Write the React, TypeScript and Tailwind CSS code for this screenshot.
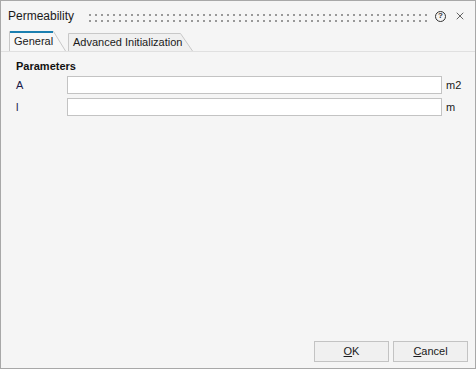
import { X } from 'lucide-react'

function Tab({ label, active, width }: { label: string; active?: boolean; width: number }) {
  const h = active ? 20 : 18
  const slant = 12
  return (
    <div className="relative flex items-center" style={{ width: width + slant, height: h }}>
      <svg className="absolute inset-0" width={width + slant} height={h}>
        <path
          d={`M0.5 ${h} L0.5 0.5 L${width - 0.5} 0.5 L${width + slant - 0.5} ${h}`}
          fill={active ? '#f7f7f7' : '#f0f0f0'}
          stroke="#c8c8c8"
        />
        {active && <rect x="1" y="0" width={width - 2} height="2" fill="#1a7fb0" />}
      </svg>
      <span className="relative pl-[5px] text-[11px] leading-[14px] text-[#1a1a1a]">{label}</span>
    </div>
  )
}

function Row({ label, unit }: { label: string; unit: string }) {
  return (
    <div className="flex items-center h-[18px]">
      <span className="w-[51px] text-[11px] text-[#1a1a4a]">{label}</span>
      <div className="w-[375px] h-[18px] bg-white border border-[#c3c3c3]" />
      <span className="ml-[4px] text-[11px] text-[#1a1a1a]">{unit}</span>
    </div>
  )
}

export default function App() {
  return (
    <div
      className="w-[476px] h-[369px] bg-[#f5f5f5] border border-[#a8a8a8] flex flex-col"
      style={{ fontFamily: '"Liberation Sans", Arial, sans-serif' }}
    >
      <div className="flex items-center h-[30px] pl-[7px] pr-[9px]">
        <span className="text-[12px] text-[#1a1a1a]">Permeability</span>
        <svg className="ml-[15px] flex-1 h-[14px]" height="14">
          <defs>
            <pattern id="grip" x="0" y="5" width="6" height="6" patternUnits="userSpaceOnUse">
              <rect x="0" y="0" width="2" height="2" fill="#999999" />
            </pattern>
          </defs>
          <rect x="0" y="5" width="100%" height="9" fill="url(#grip)" />
        </svg>
        <div className="ml-[6px] w-[11px] h-[11px] rounded-full border border-[#333] flex items-center justify-center text-[8px] font-bold text-[#333] leading-none">
          ?
        </div>
        <X className="ml-[8px] w-[12px] h-[12px] text-[#333]" strokeWidth={1.5} />
      </div>
      <div className="flex items-end gap-[2px] pl-[8px] border-b border-[#e0e0e0] h-[21px]">
        <Tab label="General" active width={45} />
        <Tab label="Advanced Initialization" width={113} />
      </div>
      <div className="flex flex-col pl-[15px] pt-[7px]">
        <span className="text-[11px] leading-[14px] font-bold text-[#111]">Parameters</span>
        <div className="mt-[3px]">
          <Row label="A" unit="m2" />
        </div>
        <div className="mt-[4px]">
          <Row label="l" unit="m" />
        </div>
      </div>
      <div className="flex-1" />
      <div className="flex justify-end gap-[4px] pr-[7px] pb-[6px]">
        <button className="w-[75px] h-[21px] border border-[#c3c3c3] bg-[#f0f0f0] text-[11px] text-[#1a1a1a]">
          <u>O</u>K
        </button>
        <button className="w-[75px] h-[21px] border border-[#c3c3c3] bg-[#f0f0f0] text-[11px] text-[#1a1a1a]">
          <u>C</u>ancel
        </button>
      </div>
    </div>
  )
}
